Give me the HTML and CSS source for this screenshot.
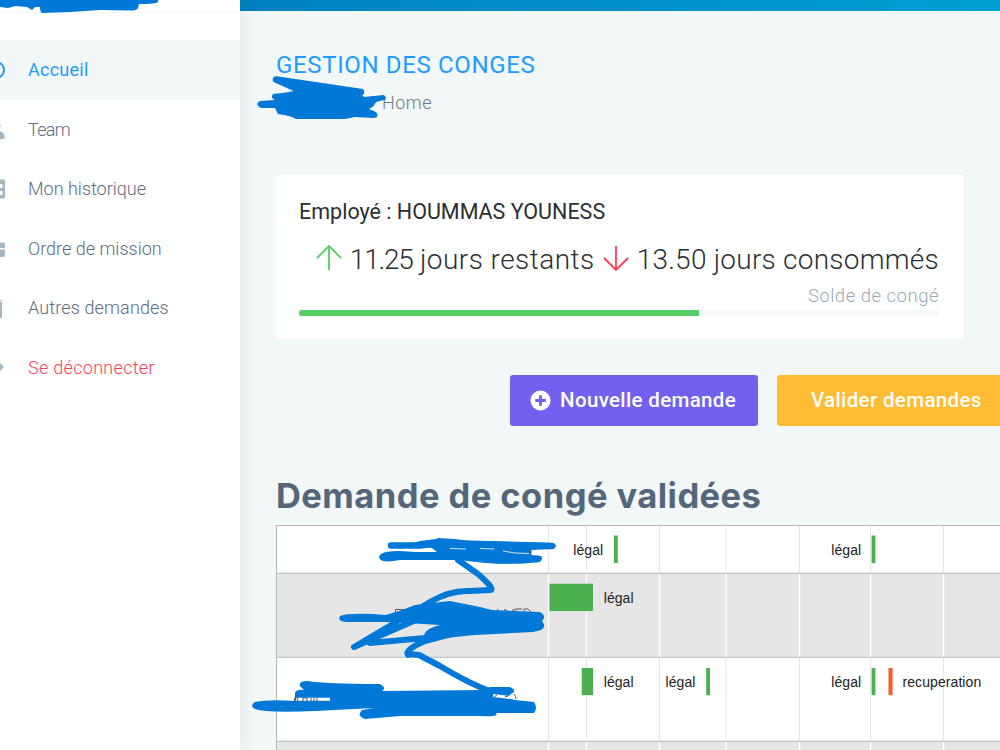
FILE: index.html
```
<!doctype html>
<html lang="fr">
  <head>
    <meta charset="utf-8" />
    <title>Gestion des conges</title>
    <meta name="viewport" content="width=device-width, initial-scale=1.0" />
    <link rel="stylesheet" href="styles.css">
  </head>
  <body>
    <div class="wrapper">
      <aside class="sidebar">
        <div class="sidebar-brand"></div>
        <nav class="menu">
          <a href="#" class="menu-item active">
            <svg class="menu-icon" viewBox="0 0 24 24"><circle cx="12" cy="12" r="8" fill="none" stroke="currentColor" stroke-width="2" /></svg>
            <span class="label-home">Accueil</span>
          </a>
          <a href="#" class="menu-item">
            <svg class="menu-icon" viewBox="0 0 24 24"><path d="M3 22v-2c0-4 3-6 8-6h4q5.500 1 5.500 5v2q0 1-1 1z" /><path class="head" d="M12 4.500a5 4.500 0 0 1 4.800 4.500l-1 2.500h-4z" /></svg>
            <span class="label-team">Team</span>
          </a>
          <a href="#" class="menu-item">
            <svg class="menu-icon" viewBox="0 0 24 24"><path fill-rule="evenodd" d="M5 2.500h14.500q1.500 0 1.500 1.500v16q0 1.500-1.500 1.500H5zM14 7h4.500v4H14zM14 14h4.500v4H14z" /></svg>
            <span class="label-history">Mon historique</span>
          </a>
          <a href="#" class="menu-item">
            <svg class="menu-icon" viewBox="0 0 24 24"><path d="M4 6.500h15.500q1.500 0 1.500 1.500V12H4zM4 13.500h17v6q0 1.500-1.500 1.500H4z" /></svg>
            <span class="label-mission">Ordre de mission</span>
          </a>
          <a href="#" class="menu-item">
            <svg class="menu-icon" viewBox="0 0 24 24"><path d="M6 6h12v16H6zM8 4h8.500q1.500 0 1.500 1H8z" /></svg>
            <span class="label-other">Autres demandes</span>
          </a>
          <a href="#" class="menu-item logout">
            <svg class="menu-icon" viewBox="0 0 24 24"><path d="M15 7l5 5-5 5z" /></svg>
            <span class="label-logout">Se déconnecter</span>
          </a>
        </nav>
      </aside>

      <div class="page">
        <div class="topbar"></div>
        <main class="content">
          <h3 class="page-title">GESTION DES CONGES</h3>
          <div class="breadcrumb">Home</div>

          <section class="card">
            <h4 class="card-title">Employé : HOUMMAS YOUNESS</h4>
            <div class="balance">
              <svg class="arrow up" viewBox="0 0 26 26"><path d="M13 25V1M1 13L13 1l12 12" /></svg>
              <span class="remaining"><span class="days">11.25</span> jours restants</span>
              <svg class="arrow down" viewBox="0 0 26 26"><path d="M13 1v24M1 13l12 12 12-12" /></svg>
              <span class="used">13.50 jours consommés</span>
            </div>
            <div class="balance-label">Solde de congé</div>
            <div class="progress"><div class="progress-bar"></div></div>
          </section>

          <div class="actions">
            <button class="btn btn-new">
              <svg class="plus" viewBox="0 0 22 22"><circle cx="11" cy="11" r="10.500" fill="#fff" /><path d="M11 5.500v11M5.500 11h11" stroke="#7460ee" stroke-width="3" /></svg>
              <span>Nouvelle demande</span>
            </button>
            <button class="btn btn-validate">Valider demandes</button>
          </div>

          <h1 class="section-title">Demande de congé validées</h1>

          <svg class="timeline" width="724" height="225" viewBox="276 525 724 225">
            <!-- rows -->
            <rect class="row" x="276" y="525" width="724" height="48" />
            <rect class="row alt" x="276" y="573" width="724" height="84" />
            <rect class="row" x="276" y="657" width="724" height="84" />
            <rect class="row alt" x="276" y="741" width="724" height="10" />
            <!-- months -->
            <path class="grid" d="M548.500 526v47M586.500 526v47M659.500 526v47M726 526v47M799.500 526v47M870.500 526v47M943.500 526v47M548.500 658v83M586.500 658v83M659.500 658v83M726 658v83M799.500 658v83M870.500 658v83M943.500 658v83" />
            <path class="grid-alt" d="M548.500 574v83M586.500 574v83M659.500 574v83M726 574v83M799.500 574v83M870.500 574v83M943.500 574v83M548.500 742v8M586.500 742v8M659.500 742v8M726 742v8M799.500 742v8M870.500 742v8M943.500 742v8" />
            <path class="row-line" d="M276 525.500h724M276 573.300h724M276 657.300h724M276 741.300h724M276.500 525v225" />
            <!-- leaves -->
            <g class="legal">
              <rect x="614" y="535.500" width="3.800" height="27.500" />
              <rect x="871.600" y="535.500" width="3.800" height="27.500" />
              <rect x="549.500" y="583.700" width="43.500" height="27.300" />
              <rect x="581.700" y="668" width="11.300" height="27.200" />
              <rect x="706.200" y="668" width="3.800" height="27.200" />
              <rect x="871.600" y="668" width="3.800" height="27.200" />
            </g>
            <rect class="recup" x="888.500" y="668" width="4" height="27.200" />
            <g class="bar-label">
              <text x="573.300" y="554.500">légal</text>
              <text x="831.300" y="554.500">légal</text>
              <text x="603.700" y="602.500">légal</text>
              <text x="603.700" y="686.700">légal</text>
              <text x="665.500" y="686.700">légal</text>
              <text x="831.300" y="686.700">légal</text>
              <text x="902.500" y="686.700">recuperation</text>
            </g>
            <!-- tops of the covered row names -->
            <path class="name-edge" d="M395.500 615v-5.500h8M496 613l2-4M505 613v-4l3 4M513 613v-4M515 613v-4h7M524 613v-4h4l3 3" />
          </svg>
        </main>
      </div>
    </div>

    <!-- marker strokes hiding the names -->
    <svg class="marker" viewBox="0 0 1000 750">
      <path class="ink" d="M0 0H158V2Q156 4 139 4L138 8Q137 11 128 10.500L100 10 70 12 42 13Q40 12 40 7H35L32 10 27 7 15 6 8 8 0 7Z" />
      <path class="pen" d="M300 90L276 79.500 361 92" />
      <path class="ink" d="M273 94Q285 93 294 91L275 82 290 82 345 91Q362 93 364 97L384 95Q388 99 384 100L376 102Q374 107 369 109L376 112Q380 117 374 118L355 117 345 119 296 119Q292 116 278 114L275 108H261Q254 104 260 101L275 100Q270 98 273 94Z" />
      <path class="pen" d="M391 545.500H420L440 543 552 546M383 557Q390 552 420 556L470 557Q500 563 538 559" />
      <path class="ink" d="M410 544L420 541 436 539 438 538 455 539 470 541 552 543Q560 546 552 549L531 550V555L541 556Q545 561 535 562Q500 566 460 560L400 560Q380 564 379 557Q380 552 392 552L437 552 432 548Z" />
      <path class="gap" d="M450 548.500l16 .5M480 548.500l14 .5M503 551l12 2 14 .5" />
      <path class="pen thin" d="M458 560L478 574Q494 588 491 590L470 591Q450 590 430 602L354 647 425 616M370 643L425 638M408 655Q404 650 425 641L470 629" />
      <path class="pen thin" d="M408 654L419 655 440 666Q470 684 490 691" />
      <path class="ink" d="M340 616Q350 612 386 615L402 610 415 605 450 601 480 607 492 610 540 612Q547 616 542 621Q547 627 541 630L533 632 475 635 425 640Q420 630 440 625L390 622 346 622Q337 621 340 616Z" />
      <path class="ink" d="M255 702Q270 699 295 701V693Q297 689 304 690L300 686Q298 681 308 681Q325 684 380 684Q387 688 382 691L485 690 490 687 510 687Q518 691 511 694L508 697 515 700 534 702Q538 708 534 713L496 713Q500 717 480 716L400 716 365 719Q356 716 362 710L374 708 315 711Q265 713 255 709Q249 706 255 702Z" />
      <path class="gap wide" d="M296 699.200H330M493 695.500L515 698" />
      <path class="name-edge" d="M294 701l2-6M298 701l-1-4M303 701v-3h4v3M311 701v-3M314 701v-3M317 701v-3M494 697l3-2M505 697l3-1M514 694q2 2 2 5M531 550v4" />
    </svg>
  </body>
</html>
```
FILE: styles.css
```
* {
  box-sizing: border-box;
}
html,
body {
  height: 750px;
  margin: 0;
  overflow: hidden;
}
body {
  background: #f2f7f8;
  color: #54667a;
  font-family: Roboto, "Open Sans", sans-serif;
  font-size: 18px;
  font-weight: 300;
}
h1,
h3,
h4 {
  margin: 0;
}
.wrapper {
  display: flex;
  height: 750px;
}
.sidebar {
  flex: 0 0 240px;
  z-index: 1;
  background: #fff;
  box-shadow: 1px 0 20px rgba(0, 0, 0, 0.08);
}
.sidebar-brand {
  height: 13px;
  margin-bottom: 27px;
  border-bottom: 1px solid #f5f6f7;
}
.menu {
  display: flex;
  flex-direction: column;
}
.menu-item {
  display: flex;
  align-items: center;
  height: 59.5px;
  padding-bottom: 0.5px;
  gap: 20px;
  color: #5d6c80;
  text-decoration: none;
}
.menu-icon {
  width: 24px;
  height: 24px;
  margin-left: -16px;
  color: #a6b7bf;
  fill: currentColor;
}
.head {
  fill: #a4e2f7;
}
.menu-item.active {
  background: #f2f7f8;
}
.active,
.active .menu-icon {
  color: #1e9bff;
}
.logout {
  color: #ff3c5c;
}
.label-home {
  font-weight: 400;
  letter-spacing: 0.25px;
}
.label-team {
  letter-spacing: -0.7px;
}
.label-other {
  letter-spacing: 0.13px;
}
.label-logout {
  letter-spacing: 0.3px;
}
.page {
  flex: 1;
  min-width: 0;
}
.topbar {
  height: 11px;
  background: linear-gradient(90deg, #0080c0, #009fd2);
}
.content {
  padding: 36px 0 0 36px;
}
.page-title {
  color: #1e9bff;
  font-size: 24px;
  font-weight: 400;
  letter-spacing: 0.65px;
  line-height: 36px;
}
.breadcrumb {
  padding: 6px 0 0 106px;
  color: #6a7a80;
  letter-spacing: 0.5px;
  line-height: 28px;
}
.card {
  width: 687px;
  height: 164px;
  margin-top: 58px;
  padding: 24px 24px 0 23px;
  background: #fff;
}
.card-title {
  color: #2b2f33;
  font-size: 21.5px;
  font-weight: 400;
  line-height: 26px;
}
.balance {
  display: flex;
  align-items: center;
  justify-content: flex-end;
  gap: 8px;
  margin-top: 17px;
  color: #2c3034;
  font-size: 28px;
  line-height: 35px;
  white-space: nowrap;
}
.remaining {
  letter-spacing: 0.45px;
}
.days {
  letter-spacing: -1.2px;
}
.used {
  letter-spacing: 0.24px;
}
.arrow {
  flex: none;
  width: 26px;
  height: 26px;
  margin-bottom: 4px;
  fill: none;
  stroke-width: 1.8;
}
.up {
  stroke: #55ce63;
}
.down {
  stroke: #ff3c5c;
}
.balance-label {
  height: 33px;
  color: #99abb4;
  font-size: 18.5px;
  letter-spacing: 0.5px;
  line-height: 38px;
  text-align: right;
}
.progress {
  height: 6px;
  background: #f6f8f9;
}
.progress-bar {
  width: 62.5%;
  height: 6px;
  border-radius: 3px 0 0 3px;
  background: #55ce63;
}
.actions {
  display: flex;
  gap: 19px;
  margin: 36px 0 0 234px;
}
.btn {
  display: flex;
  flex: none;
  align-items: center;
  height: 51px;
  border: 0;
  border-radius: 3px;
  color: #fff;
  font: 500 20.5px Roboto, sans-serif;
  letter-spacing: 0.35px;
  white-space: nowrap;
}
.btn-new {
  width: 248px;
  padding: 0 0 1px 20px;
  gap: 9px;
  background: #7460ee;
}
.btn-validate {
  width: 262px;
  padding: 0 0 1px 34px;
  background: #ffbc34;
}
.plus {
  width: 21px;
  height: 21px;
}
.section-title {
  margin-top: 47px;
  font-family: Inter, Roboto, sans-serif;
  font-size: 34.5px;
  font-weight: 700;
  letter-spacing: 0.45px;
  line-height: 46px;
}
.timeline {
  display: block;
  margin-top: 6px;
}
.row {
  fill: #fff;
}
.row.alt {
  fill: #e6e6e6;
}
.grid,
.grid-alt,
.row-line {
  fill: none;
  stroke: #e6e6e6;
}
.grid-alt {
  stroke: #fff;
  stroke-width: 1.3;
}
.row-line {
  stroke: #b7b7b7;
}
.legal {
  fill: #4caf50;
}
.recup {
  fill: #ff5722;
}
.bar-label {
  fill: #222;
  font: 400 14px "Liberation Sans", Arial, sans-serif;
  letter-spacing: 0.08px;
}
.name-edge {
  fill: none;
  stroke: #555;
}
.marker {
  position: absolute;
  top: 0;
  left: 0;
  z-index: 2;
  width: 1000px;
  height: 750px;
}
.ink {
  fill: #0078d7;
}
.pen {
  fill: none;
  stroke: #0078d7;
  stroke-width: 6.5;
  stroke-linecap: round;
  stroke-linejoin: round;
}
.pen.thin {
  stroke-width: 6;
}
.gap {
  fill: none;
  stroke: #d5e3ee;
}
.gap.wide {
  stroke: #fff;
  stroke-width: 3;
}
```
